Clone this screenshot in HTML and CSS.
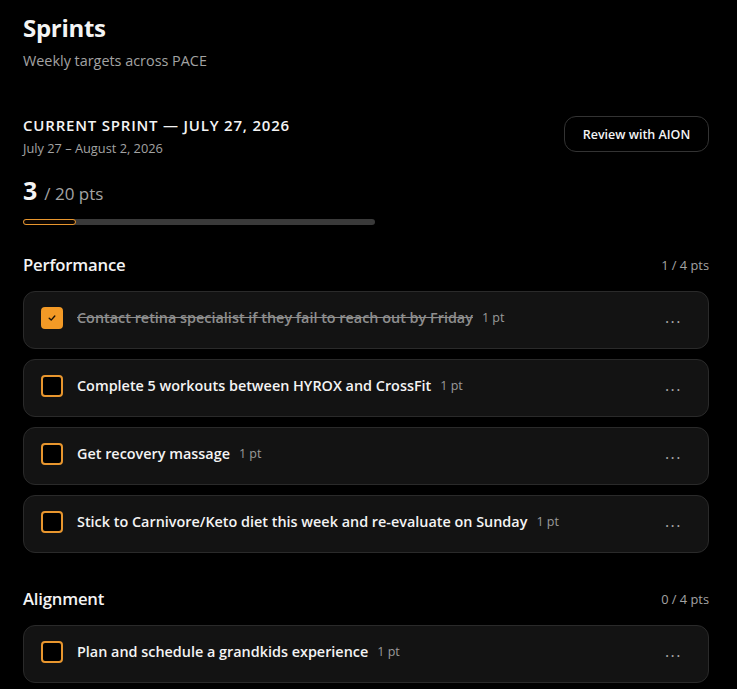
FILE: index.html
```html
<!DOCTYPE html>
<html lang="en">
<head>
<meta charset="utf-8">
<title>Sprints</title>
<link rel="stylesheet" href="styles.css">
</head>
<body>
<main class="page">
  <header class="page-head">
    <h1 class="page-title">Sprints</h1>
    <p class="page-sub">Weekly targets across PACE</p>
  </header>

  <section class="sprint">
    <div class="sprint-head">
      <div class="sprint-info">
        <h2 class="sprint-title">Current Sprint — July 27, 2026</h2>
        <p class="sprint-range">July 27 – August 2, 2026</p>
      </div>
      <button class="btn-review" type="button">Review with AION</button>
    </div>
    <div class="points">
      <span class="points-done">3</span>
      <span class="points-total">/ 20 pts</span>
    </div>
    <div class="progress"><div class="progress-fill" style="width: 15%"></div></div>
  </section>

  <section class="group">
    <div class="group-head">
      <h3 class="group-title">Performance</h3>
      <span class="group-pts">1 / 4 pts</span>
    </div>
    <ul class="tasks">
      <li class="task is-done">
        <span class="check">
          <svg viewBox="0 0 10 10" width="10" height="10"><path d="M2.2 5.2 L4.2 7.1 L7.8 3" fill="none" stroke="#1a1208" stroke-width="1.4" stroke-linecap="round" stroke-linejoin="round"/></svg>
        </span>
        <span class="task-name">Contact retina specialist if they fail to reach out by Friday</span>
        <span class="task-pts">1 pt</span>
        <span class="task-more">···</span>
      </li>
      <li class="task">
        <span class="check"></span>
        <span class="task-name">Complete 5 workouts between HYROX and CrossFit</span>
        <span class="task-pts">1 pt</span>
        <span class="task-more">···</span>
      </li>
      <li class="task">
        <span class="check"></span>
        <span class="task-name">Get recovery massage</span>
        <span class="task-pts">1 pt</span>
        <span class="task-more">···</span>
      </li>
      <li class="task">
        <span class="check"></span>
        <span class="task-name">Stick to Carnivore/Keto diet this week and re-evaluate on Sunday</span>
        <span class="task-pts">1 pt</span>
        <span class="task-more">···</span>
      </li>
    </ul>
  </section>

  <section class="group">
    <div class="group-head">
      <h3 class="group-title">Alignment</h3>
      <span class="group-pts">0 / 4 pts</span>
    </div>
    <ul class="tasks">
      <li class="task">
        <span class="check"></span>
        <span class="task-name">Plan and schedule a grandkids experience</span>
        <span class="task-pts">1 pt</span>
        <span class="task-more">···</span>
      </li>
    </ul>
  </section>
</main>
</body>
</html>
```

FILE: styles.css
```css
* { box-sizing: border-box; }

html, body {
  margin: 0;
  background: #000;
  color: #f4f4f4;
  font-family: "Open Sans", "Noto Sans", sans-serif;
}

.page {
  padding: 11px 28px 0 23px;
}

.page-title {
  margin: 0;
  font-size: 24px;
  line-height: 34px;
  font-weight: 700;
  letter-spacing: -0.3px;
}

.page-sub {
  margin: 6px 0 0;
  font-size: 14.4px;
  line-height: 20px;
  color: #a3a3a3;
}

.sprint {
  margin-top: 44px;
}

.sprint-head {
  display: flex;
  justify-content: space-between;
  align-items: center;
}

.sprint-title {
  margin: 0;
  font-size: 15px;
  line-height: 20px;
  font-weight: 600;
  text-transform: uppercase;
  letter-spacing: 0.8px;
}

.sprint-range {
  margin: 4px 0 0;
  font-size: 12.8px;
  line-height: 18px;
  color: #a3a3a3;
}

.btn-review {
  width: 145px;
  height: 36px;
  margin-top: -4px;
  background: #000;
  border: 1px solid #333;
  border-radius: 12px;
  color: #f4f4f4;
  font-family: inherit;
  font-size: 12.5px;
  font-weight: 600;
}

.points {
  margin-top: 18px;
  display: flex;
  align-items: baseline;
  gap: 7px;
}

.points-done {
  font-size: 25px;
  line-height: 30px;
  font-weight: 700;
}

.points-total {
  font-size: 17px;
  color: #a3a3a3;
}

.progress {
  margin-top: 14px;
  width: 352px;
  height: 6px;
  border-radius: 3px;
  background: #3a3a3a;
}

.progress-fill {
  height: 100%;
  border-radius: 3px;
  border: 1.5px solid #e8962e;
  background: #0c0602;
}

.group {
  margin-top: 28px;
}

.group + .group {
  margin-top: 34px;
}

.group-head {
  display: flex;
  justify-content: space-between;
  align-items: center;
}

.group-title {
  margin: 0;
  font-size: 16.7px;
  line-height: 24px;
  font-weight: 600;
  letter-spacing: -0.2px;
}

.group-pts {
  font-size: 12.8px;
  color: #a3a3a3;
}

.tasks {
  list-style: none;
  margin: 14px 0 0;
  padding: 0;
  display: flex;
  flex-direction: column;
  gap: 10px;
}

.task {
  display: flex;
  align-items: center;
  height: 58px;
  padding: 0 26px 5px 17px;
  background: #131313;
  border: 1px solid #2a2a2a;
  border-radius: 12px;
}

.check {
  flex: none;
  width: 22px;
  height: 22px;
  border: 2px solid #e8962e;
  border-radius: 4px;
  background: #000;
  display: flex;
  align-items: center;
  justify-content: center;
}

.is-done .check {
  background: #f39a26;
  border-color: #f39a26;
}

.task-name {
  margin-left: 14px;
  font-size: 14.4px;
  line-height: 20px;
  font-weight: 600;
  color: #f4f4f4;
}

.is-done .task-name {
  color: #8e8e8e;
  text-decoration: line-through;
}

.task-pts {
  margin-left: 9px;
  font-size: 12.5px;
  color: #9a9a9a;
}

.task-more {
  margin-left: auto;
  margin-top: 9px;
  font-size: 16px;
  line-height: 10px;
  color: #a8a8a8;
  letter-spacing: 1.5px;
}
```
